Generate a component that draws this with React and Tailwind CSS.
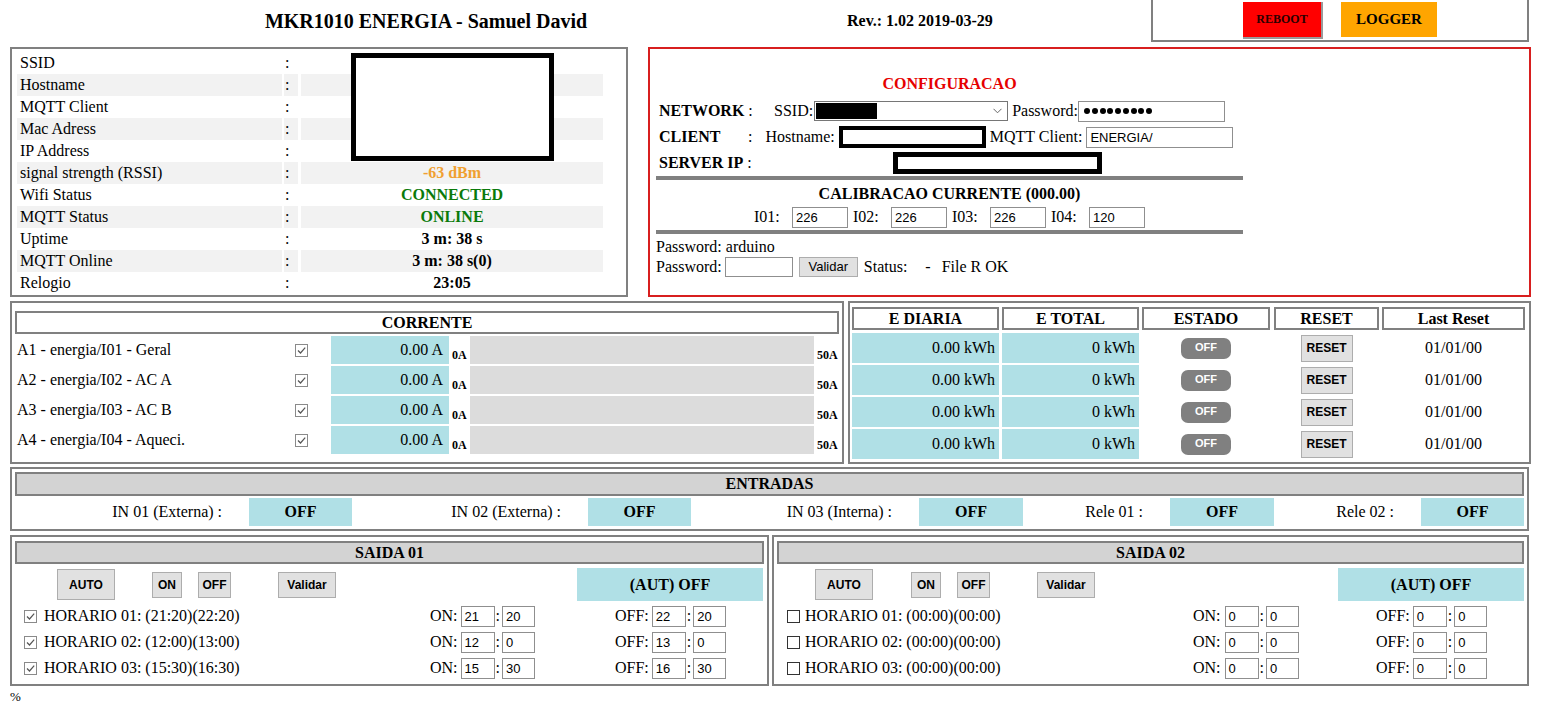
import React from "react";

const SANS = "font-['Liberation_Sans',Arial,sans-serif]";

function Check({ checked }) {
  return (
    <span
      className={
        "inline-flex items-center justify-center w-[13px] h-[13px] bg-white shrink-0 border " +
        (checked ? "border-[#8a8a8a]" : "border-[#333333]")
      }
    >
      {checked && (
        <svg width="11" height="11" viewBox="0 0 11 11">
          <path d="M2 5.5 L4.5 8 L9.2 2.6" fill="none" stroke="#555" strokeWidth="1.2" />
        </svg>
      )}
    </span>
  );
}

function Field({ className, children }) {
  return (
    <div
      className={
        "flex items-center bg-white border border-[#8f8f8f] pl-[3px] text-[13px] leading-none " +
        SANS +
        " " +
        className
      }
    >
      {children}
    </div>
  );
}

function GrayBtn({ className, children }) {
  return (
    <div
      className={
        "flex items-center justify-center bg-[#e1e1e1] border border-[#adadad] font-bold text-[12px] leading-none " +
        SANS +
        " " +
        className
      }
    >
      {children}
    </div>
  );
}

const infoRows = [
  ["SSID", "", ""],
  ["Hostname", "", ""],
  ["MQTT Client", "", ""],
  ["Mac Adress", "", ""],
  ["IP Address", "", ""],
  ["signal strength (RSSI)", "-63 dBm", "text-[#f0a030]"],
  ["Wifi Status", "CONNECTED", "text-[#0a7a0a]"],
  ["MQTT Status", "ONLINE", "text-[#0a7a0a]"],
  ["Uptime", "3 m: 38 s", "text-black"],
  ["MQTT Online", "3 m: 38 s(0)", "text-black"],
  ["Relogio", "23:05", "text-black"],
];

const correnteRows = [
  "A1 - energia/I01 - Geral",
  "A2 - energia/I02 - AC A",
  "A3 - energia/I03 - AC B",
  "A4 - energia/I04 - Aqueci.",
];

function Saida({ title, offsets, rows, checked }) {
  const o = offsets;
  return (
    <div className={"border-2 border-[#808080] pl-[3px] pt-[4px] h-[151px] " + o.panelW}>
      <div
        className={
          "h-[23px] bg-[#d3d3d3] border-2 border-[#808080] flex items-center justify-center font-bold " +
          o.headW
        }
      >
        {title}
      </div>
      <div className="flex items-center h-[33px] mt-[4px]">
        <GrayBtn className={"w-[58px] h-[31px] " + o.auto}>AUTO</GrayBtn>
        <GrayBtn className={"w-[30px] h-[26px] " + o.on}>ON</GrayBtn>
        <GrayBtn className="w-[33px] h-[26px] ml-[16px]">OFF</GrayBtn>
        <GrayBtn className="w-[58px] h-[26px] ml-[47px]">Validar</GrayBtn>
        <div
          className={
            "w-[186px] h-[33px] bg-[#b0e0e6] flex items-center justify-center font-bold text-[16px] " +
            o.aut
          }
        >
          (AUT) OFF
        </div>
      </div>
      <div className="mt-[2px]">
        {rows.map((r, i) => (
          <div key={i} className="flex items-center h-[26px]">
            <div className={"flex items-center " + o.first}>
              <span className={o.chk}>
                <Check checked={checked} />
              </span>
              <span className={"whitespace-nowrap " + o.txt}>{r.label}</span>
            </div>
            <span>ON:</span>
            <Field className={"w-[34px] h-[21px] " + o.onIn}>{r.on[0]}</Field>
            <span className="ml-[1px]">:</span>
            <Field className="w-[33px] h-[21px] ml-[2px]">{r.on[1]}</Field>
            <span className={o.offL}>OFF:</span>
            <Field className="w-[34px] h-[21px] ml-[3px]">{r.off[0]}</Field>
            <span className="ml-[1px]">:</span>
            <Field className="w-[33px] h-[21px] ml-[2px]">{r.off[1]}</Field>
          </div>
        ))}
      </div>
    </div>
  );
}

export default function App() {
  return (
    <div className="w-[1550px] h-[706px] overflow-hidden bg-white text-black font-['Liberation_Serif',serif] text-[16px] leading-tight">
      {/* Header */}
      <div className="flex h-[42px]">
        <div className="w-[846px] pl-[6px] flex items-center justify-center text-[20px] font-bold">
          MKR1010 ENERGIA - Samuel David
        </div>
        <div className="w-[305px] pl-[1px] flex items-center text-[16px] font-bold">
          Rev.: 1.02 2019-03-29
        </div>
        <div className="w-[378px] h-[42px] border-2 border-t-0 border-[#808080] flex items-start pl-[90px]">
          <div className="mt-[2px] w-[80px] h-[37px] bg-[#ff0000] border-b-2 border-r-2 border-[#9a9a9a] flex items-center justify-center font-bold text-[12px] text-[#2a0000]">
            REBOOT
          </div>
          <div className="mt-[2px] ml-[18px] w-[96px] h-[35px] bg-[#ffa500] flex items-center justify-center font-bold text-[15px]">
            LOGGER
          </div>
        </div>
      </div>

      {/* Top panels */}
      <div className="flex pl-[10px] mt-[5px]">
        <div className="relative w-[618px] h-[250px] border-2 border-[#808080] pt-[3px] pl-[5px]">
          {infoRows.map(([label, value, color], i) => {
            const shade = i % 2 === 1 ? "bg-[#f2f2f2]" : "";
            return (
              <div key={label} className="flex h-[22px] leading-[22px]">
                <div className={"w-[265px] pl-[3px] " + shade}>{label}</div>
                <div className={"w-[14px] ml-[2px] pl-[1px] " + shade}>:</div>
                <div className={"w-[302px] ml-[3px] text-center font-bold " + shade + " " + color}>
                  {value}
                </div>
              </div>
            );
          })}
          <div className="absolute left-[339px] top-[4px] w-[203px] h-[108px] border-[5px] border-black bg-white" />
        </div>

        <div className="ml-[20px] w-[883px] h-[250px] border-2 border-[#d81f1f] pl-[6px]">
          <div className="w-[587px]">
            <div className="h-[24px]" />
            <div className="h-[22px] flex items-center justify-center font-bold text-[#e60000]">
              CONFIGURACAO
            </div>
            {/* NETWORK */}
            <div className="mt-[3px] h-[26px] flex items-center">
              <div className="w-[118px] pl-[3px] whitespace-nowrap">
                <span className="font-bold">NETWORK</span> :
              </div>
              <span>SSID:</span>
              <div className="ml-[1px] w-[194px] h-[20px] border border-[#767676] bg-white flex items-center pl-[1px] pr-[5px]">
                <div className="w-[61px] h-[16px] bg-black" />
                <div className="flex-1" />
                <svg width="9" height="6" viewBox="0 0 9 6">
                  <path d="M0.5 0.8 L4.5 4.8 L8.5 0.8" fill="none" stroke="#666" strokeWidth="1" />
                </svg>
              </div>
              <span className="ml-[4px]">Password:</span>
              <div className="w-[147px] h-[21px] border border-[#8f8f8f] bg-white flex items-center pl-[5px] gap-[1.8px]">
                {Array.from({ length: 9 }).map((_, i) => (
                  <span key={i} className="w-[6px] h-[6px] rounded-full bg-black" />
                ))}
              </div>
            </div>
            {/* CLIENT */}
            <div className="h-[26px] flex items-center">
              <div className="w-[92px] pl-[3px] font-bold">CLIENT</div>
              <span>:</span>
              <span className="ml-[13px]">Hostname:</span>
              <div className="ml-[4px] w-[147px] h-[22px] border-[4px] border-black bg-white" />
              <span className="ml-[4px]">MQTT Client:</span>
              <Field className="ml-[4px] w-[147px] h-[21px] text-[12px]">ENERGIA/</Field>
            </div>
            {/* SERVER IP */}
            <div className="h-[26px] flex items-center">
              <div className="w-[237px] pl-[3px] whitespace-nowrap">
                <span className="font-bold">SERVER IP</span> :
              </div>
              <div className="w-[209px] h-[22px] border-[5px] border-black bg-white" />
            </div>
            <div className="h-[4px] bg-[#808080]" />
            <div className="mt-[3px] h-[22px] flex items-center justify-center font-bold">
              CALIBRACAO CURRENTE (000.00)
            </div>
            <div className="h-[24px] flex items-center justify-center">
              {[
                ["I01:", "226"],
                ["I02:", "226"],
                ["I03:", "226"],
                ["I04:", "120"],
              ].map(([l, v], i) => (
                <div key={l} className={"flex items-center " + (i > 0 ? "ml-[5px]" : "")}>
                  <span className="w-[38px]">{l}</span>
                  <Field className="w-[56px] h-[21px]">{v}</Field>
                </div>
              ))}
            </div>
            <div className="mt-[1px] h-[4px] bg-[#808080]" />
            <div className="mt-[4px] h-[18px] flex items-center">Password: arduino</div>
            <div className="h-[22px] flex items-center">
              <span>Password:</span>
              <Field className="ml-[3px] w-[68px] h-[20px]"> </Field>
              <div
                className={
                  "ml-[6px] w-[59px] h-[20px] bg-[#e1e1e1] border border-[#adadad] flex items-center justify-center text-[13px] " +
                  SANS
                }
              >
                Validar
              </div>
              <span className="ml-[6px]">Status:</span>
              <span className="ml-[18px]">-</span>
              <span className="ml-[11px]">File R OK</span>
            </div>
          </div>
        </div>
      </div>

      {/* Second row */}
      <div className="flex pl-[10px] mt-[4px]">
        <div className="w-[834px] h-[163px] border-2 border-[#808080] pl-[3px]">
          <div className="mt-[8px] w-[824px] h-[23px] border-2 border-[#808080] flex items-center justify-center font-bold">
            CORRENTE
          </div>
          <div className="mt-[2px] flex flex-col gap-[2px]">
            {correnteRows.map((l) => (
              <div key={l} className="flex h-[28px]">
                <div className="w-[270px] pl-[2px] flex items-center whitespace-nowrap">{l}</div>
                <div className="w-[46px] pl-[10px] flex items-center">
                  <Check checked />
                </div>
                <div className="w-[118px] bg-[#b0e0e6] flex items-center justify-end pr-[6px]">0.00 A</div>
                <div className="w-[21px] pl-[3px] flex items-end pb-[3px] text-[12px] font-bold leading-none">0A</div>
                <div className="w-[344px] bg-[#dcdcdc]" />
                <div className="w-[24px] pl-[3px] flex items-end pb-[3px] text-[12px] font-bold leading-none">50A</div>
              </div>
            ))}
          </div>
        </div>

        <div className="ml-[4px] w-[683px] h-[163px] border-2 border-[#808080] pl-[2px] pt-[4px]">
          <div className="flex h-[23px] font-bold">
            <div className="w-[147px] border-2 border-[#808080] flex items-center justify-center">E DIARIA</div>
            <div className="ml-[3px] w-[137px] border-2 border-[#808080] flex items-center justify-center">E TOTAL</div>
            <div className="ml-[3px] w-[128px] border-2 border-[#808080] flex items-center justify-center">ESTADO</div>
            <div className="ml-[4px] w-[105px] border-2 border-[#808080] flex items-center justify-center">RESET</div>
            <div className="ml-[3px] w-[143px] border-2 border-[#808080] flex items-center justify-center">Last Reset</div>
          </div>
          <div className="mt-[3px] flex flex-col gap-[2px]">
            {[0, 1, 2, 3].map((i) => (
              <div key={i} className="flex h-[30px]">
                <div className="w-[147px] bg-[#b0e0e6] flex items-center justify-end pr-[4px]">0.00 kWh</div>
                <div className="ml-[3px] w-[137px] bg-[#b0e0e6] flex items-center justify-end pr-[4px]">0 kWh</div>
                <div className="ml-[3px] w-[128px] flex items-center justify-center">
                  <div
                    className={
                      "w-[50px] h-[21px] rounded-[7px] bg-[#808080] text-white font-bold text-[11px] flex items-center justify-center " +
                      SANS
                    }
                  >
                    OFF
                  </div>
                </div>
                <div className="ml-[4px] w-[105px] flex items-center justify-center">
                  <GrayBtn className="w-[52px] h-[27px]">RESET</GrayBtn>
                </div>
                <div className="ml-[3px] w-[143px] flex items-center justify-center">01/01/00</div>
              </div>
            ))}
          </div>
        </div>
      </div>

      {/* Entradas */}
      <div className="pl-[10px] mt-[3px]">
        <div className="w-[1519px] h-[64px] border-2 border-[#808080] pl-[3px] pt-[3px]">
          <div className="w-[1509px] h-[24px] bg-[#d3d3d3] border-2 border-[#808080] flex items-center justify-center font-bold">
            ENTRADAS
          </div>
          <div className="mt-[2px] flex h-[28px] gap-[2px]">
            <div className="w-[232px] pr-[25px] flex items-center justify-end">IN 01 (Externa) :</div>
            <div className="w-[103px] bg-[#b0e0e6] flex items-center justify-center font-bold">OFF</div>
            <div className="w-[232px] pr-[25px] flex items-center justify-end">IN 02 (Externa) :</div>
            <div className="w-[103px] bg-[#b0e0e6] flex items-center justify-center font-bold">OFF</div>
            <div className="w-[224px] pr-[25px] flex items-center justify-end">IN 03 (Interna) :</div>
            <div className="w-[104px] bg-[#b0e0e6] flex items-center justify-center font-bold">OFF</div>
            <div className="w-[143px] pr-[25px] flex items-center justify-end">Rele 01 :</div>
            <div className="w-[104px] bg-[#b0e0e6] flex items-center justify-center font-bold">OFF</div>
            <div className="w-[143px] pr-[25px] flex items-center justify-end">Rele 02 :</div>
            <div className="w-[103px] bg-[#b0e0e6] flex items-center justify-center font-bold">OFF</div>
          </div>
        </div>
      </div>

      {/* Saidas */}
      <div className="flex pl-[10px] mt-[4px]">
        <Saida
          title="SAIDA 01"
          checked
          offsets={{
            panelW: "w-[759px]",
            headW: "w-[749px]",
            auto: "ml-[42px]",
            on: "ml-[37px]",
            aut: "ml-[241px]",
            first: "w-[415px]",
            chk: "ml-[9px] flex",
            txt: "ml-[7px]",
            onIn: "ml-[3px]",
            offL: "ml-[80px]",
          }}
          rows={[
            { label: "HORARIO 01: (21:20)(22:20)", on: ["21", "20"], off: ["22", "20"] },
            { label: "HORARIO 02: (12:00)(13:00)", on: ["12", "0"], off: ["13", "0"] },
            { label: "HORARIO 03: (15:30)(16:30)", on: ["15", "30"], off: ["16", "30"] },
          ]}
        />
        <div className="ml-[3px]">
          <Saida
            title="SAIDA 02"
            checked={false}
            offsets={{
              panelW: "w-[757px]",
              headW: "w-[747px]",
              auto: "ml-[38px]",
              on: "ml-[38px]",
              aut: "ml-[243px]",
              first: "w-[416px]",
              chk: "ml-[10px] flex",
              txt: "ml-[5px]",
              onIn: "ml-[4px]",
              offL: "ml-[77px]",
            }}
            rows={[
              { label: "HORARIO 01: (00:00)(00:00)", on: ["0", "0"], off: ["0", "0"] },
              { label: "HORARIO 02: (00:00)(00:00)", on: ["0", "0"], off: ["0", "0"] },
              { label: "HORARIO 03: (00:00)(00:00)", on: ["0", "0"], off: ["0", "0"] },
            ]}
          />
        </div>
      </div>

      <div className="pl-[10px] mt-[4px] text-[13px] leading-[14px]">%</div>
    </div>
  );
}
